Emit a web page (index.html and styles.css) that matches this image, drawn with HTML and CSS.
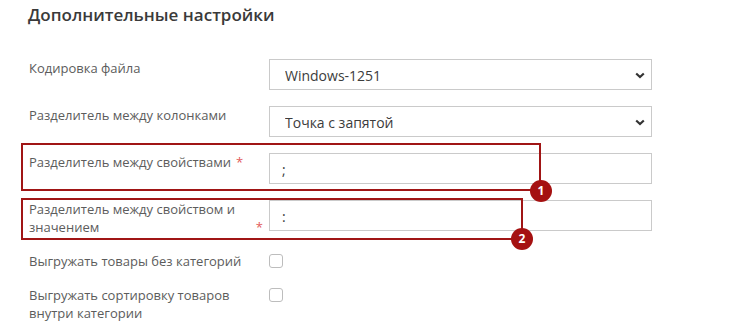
FILE: index.html
```html
<!DOCTYPE html>
<html lang="ru">
<head>
    <meta charset="UTF-8">
    <meta name="viewport" content="width=device-width, initial-scale=1.0">
    <title>Дополнительные настройки</title>
    <link rel="stylesheet" href="styles.css">
</head>
<body>
    <div class="settings">
        <h2 class="settings-title">Дополнительные настройки</h2>

        <div class="form-row">
            <label class="form-label" for="encoding"><span>Кодировка файла</span></label>
            <div class="select-wrap">
                <select id="encoding" class="form-control">
                    <option>Windows-1251</option>
                    <option>UTF-8</option>
                </select>
                <svg class="select-arrow" width="10" height="7" viewBox="0 0 10 7"><path d="M1.2 1.5 L5 5 L8.8 1.5" fill="none" stroke="#333" stroke-width="2.2"/></svg>
            </div>
        </div>

        <div class="form-row">
            <label class="form-label" for="col_sep"><span>Разделитель между колонками</span></label>
            <div class="select-wrap">
                <select id="col_sep" class="form-control">
                    <option>Точка с запятой</option>
                    <option>Запятая</option>
                </select>
                <svg class="select-arrow" width="10" height="7" viewBox="0 0 10 7"><path d="M1.2 1.5 L5 5 L8.8 1.5" fill="none" stroke="#333" stroke-width="2.2"/></svg>
            </div>
        </div>

        <div class="form-row">
            <label class="form-label" for="prop_sep"><span>Разделитель между свойствами</span><span class="required">*</span></label>
            <input type="text" id="prop_sep" class="form-control text-input" value=";">
        </div>

        <div class="form-row">
            <label class="form-label" for="value_sep"><span>Разделитель между свойством и значением</span><span class="required">*</span></label>
            <input type="text" id="value_sep" class="form-control text-input" value=":">
        </div>

        <div class="form-row">
            <label class="form-label" for="no_cat"><span>Выгружать товары без категорий</span></label>
            <input type="checkbox" id="no_cat" class="form-check">
        </div>

        <div class="form-row">
            <label class="form-label" for="sort_cat"><span>Выгружать сортировку товаров внутри категории</span></label>
            <input type="checkbox" id="sort_cat" class="form-check">
        </div>

        <!-- annotations -->
        <div class="mark mark-1"></div>
        <div class="badge badge-1">1</div>
        <div class="mark mark-2"></div>
        <div class="badge badge-2">2</div>
    </div>
</body>
</html>
```

FILE: styles.css
```css
* {
    box-sizing: border-box;
}

body {
    margin: 0;
    background: #fff;
    font-family: 'Open Sans', 'Noto Sans', sans-serif;
}

.settings {
    position: relative;
    padding: 3px 0 0 29px;
    width: 740px;
}

.settings-title {
    margin: 0 0 32px -1px;
    font-size: 17px;
    line-height: 24px;
    font-weight: 600;
    color: #3a3a3a;
}

.form-row {
    display: flex;
    align-items: flex-start;
    margin-bottom: 16px;
}

.form-label {
    display: flex;
    width: 234px;
    margin-right: 6px;
    font-size: 13px;
    line-height: 18px;
    color: #5c5c5c;
}

.form-label .required {
    align-self: flex-end;
    margin-left: 5px;
    color: #e25a5a;
}

.form-control {
    width: 383px;
    height: 31px;
    padding: 2px 15px 0;
    border: 1px solid #cacaca;
    border-radius: 0;
    background: #fff;
    font-family: 'Open Sans', 'Noto Sans', sans-serif;
    font-size: 14px;
    color: #3c3c3c;
    outline: none;
}

.text-input {
    padding-left: 12px;
}

.select-wrap {
    position: relative;
}

.select-wrap select {
    appearance: none;
    -webkit-appearance: none;
    display: block;
}

.select-arrow {
    position: absolute;
    right: 7px;
    top: 13px;
}

.form-check {
    appearance: none;
    -webkit-appearance: none;
    width: 14px;
    height: 14px;
    margin: 2px 0 0;
    border: 1px solid #bdbdbd;
    border-radius: 3px;
    background: #fff;
}

.mark {
    position: absolute;
    border: 2px solid #a01515;
}

.mark-1 {
    left: 21px;
    top: 143px;
    width: 520px;
    height: 48px;
}

.mark-2 {
    left: 21px;
    top: 198px;
    width: 502px;
    height: 42px;
}

.badge {
    position: absolute;
    width: 22px;
    height: 22px;
    border-radius: 50%;
    background: #a51111;
    color: #fff;
    font-size: 12px;
    font-weight: 700;
    line-height: 22px;
    text-align: center;
}

.badge-1 {
    left: 530px;
    top: 180px;
}

.badge-2 {
    left: 511px;
    top: 228px;
}
```
